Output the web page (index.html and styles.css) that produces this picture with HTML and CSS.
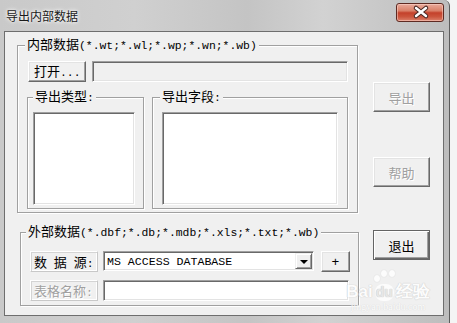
FILE: index.html
```html
<!DOCTYPE html>
<html>

<head>
    <link rel="stylesheet" href="styles.css">
</head>

<body>
    <div class="window">
        <div class="titlebar">
            <span class="title">导出内部数据</span>
            <button type="button" class="close">
                <svg width="46" height="17" viewBox="0 0 46 17">
                    <path d="M19 4 L29 12 M29 4 L19 12" stroke="#4a2a26" stroke-width="4.5" stroke-linecap="round" />
                    <path d="M19 4 L29 12 M29 4 L19 12" stroke="#ffffff" stroke-width="2.4" stroke-linecap="round" />
                </svg>
            </button>
        </div>
        <div class="client">
            <div class="left">
                <fieldset class="group g1">
                    <legend>内部数据<span class="asc">(*.wt;*.wl;*.wp;*.wn;*.wb)</span></legend>
                    <div class="row">
                        <button type="button" class="btn open">打开<span class="asc">...</span></button>
                        <div class="sunken readonly"></div>
                    </div>
                    <div class="lists">
                        <fieldset class="group inner type">
                            <legend>导出类型<span class="asc">:</span></legend>
                            <div class="sunken listbox"></div>
                        </fieldset>
                        <fieldset class="group inner fields">
                            <legend>导出字段<span class="asc">:</span></legend>
                            <div class="sunken listbox"></div>
                        </fieldset>
                    </div>
                </fieldset>

                <fieldset class="group g2">
                    <legend>外部数据<span class="asc">(*.dbf;*.db;*.mdb;*.xls;*.txt;*.wb)</span></legend>
                    <div class="row">
                        <div class="tag">数<span class="asc"> </span>据<span class="asc"> </span>源<span class="asc">:</span></div>
                        <div class="sunken combo">
                            <span class="combo-text">MS ACCESS DATABASE</span>
                            <span class="drop"><span class="arrow"></span></span>
                        </div>
                        <button type="button" class="btn plus"><span class="asc">+</span></button>
                    </div>
                    <div class="row row2">
                        <div class="tag off">表格名称<span class="asc">:</span></div>
                        <div class="sunken tablename"></div>
                    </div>
                </fieldset>
            </div>

            <div class="right">
                <button type="button" class="btn side" disabled>导出</button>
                <button type="button" class="btn side help" disabled>帮助</button>
                <button type="button" class="btn side quit">退出</button>
            </div>

            <div class="mark">
                <div class="paw">
                    <span class="toe t1"></span><span class="toe t2"></span><span class="toe t3"></span>
                </div>
                <div class="mark-logo">Bai<span class="du">du</span>经验</div>
                <div class="mark-url">jingyan.baidu.com</div>
            </div>
        </div>
    </div>
</body>

</html>
```

FILE: styles.css
```css
body {
    margin: 0;
    background-color: #f4f4f4;
    font-family: "Noto Sans CJK SC", sans-serif;
    font-size: 13px;
    color: #000;
}

.window {
    width: 449px;
    height: 323px;
    overflow: hidden;
    background: linear-gradient(90deg, #c9c9c9 0%, #d0d0d0 30%, #c4c4c4 55%, #d2d2d2 72%, #bdbdbd 100%);
    border-right: 1px solid #5c5c5c;
    border-top-right-radius: 6px;
}

.titlebar {
    height: 31px;
    display: flex;
    justify-content: space-between;
    align-items: flex-start;
}

.title {
    margin: 7px 0 0 6px;
    font-size: 12px;
    line-height: 17px;
    color: #1a1a1a;
    text-shadow: 0 0 5px #fff, 0 0 3px #fff;
}

.close {
    margin: 3px 5px 0 0;
    width: 48px;
    height: 19px;
    padding: 0;
    border: 1px solid #5e2a22;
    border-radius: 3px;
    background: linear-gradient(#e9aa9c 0%, #d98068 40%, #c4412b 52%, #cb553d 75%, #dc826c 100%);
    box-shadow: inset 0 0 0 1px rgba(255, 220, 210, 0.5);
    display: flex;
    align-items: center;
    justify-content: center;
}

.client {
    position: relative;
    margin-left: 4px;
    width: 440px;
    height: 285px;
    box-sizing: border-box;
    border: 1px solid #6e6e6e;
    background-color: #f0f0f0;
    display: flex;
}

.asc {
    font-family: "Liberation Mono", monospace;
    font-size: 11.4px;
}

/* group boxes */
.left {
    width: 342px;
    margin-left: 12px;
    padding-top: 4px;
    display: flex;
    flex-direction: column;
    align-items: flex-start;
}

.group {
    box-sizing: border-box;
    margin: 0;
    min-width: 0;
    border: 1px solid #a0a0a0;
    box-shadow: inset 1px 1px 0 #fff, 1px 1px 0 #fff;
}

.group legend {
    padding: 0 2px;
    line-height: 15px;
    background-color: #f0f0f0;
    white-space: nowrap;
}

.g1 {
    width: 341px;
    height: 177px;
    padding: 7px 9px 6px 9px;
}

.g1 > legend {
    margin-left: -2px;
}

.row {
    display: flex;
    height: 21px;
}

.lists {
    display: flex;
    gap: 8px;
    margin-top: 6px;
}

.inner {
    height: 121px;
    padding-top: 6px;
    padding-bottom: 6px;
}

.type {
    width: 117px;
    padding-left: 5px;
    padding-right: 8px;
}

.fields {
    width: 196px;
    padding-left: 9px;
    padding-right: 9px;
}

.fields > legend {
    margin-left: -2px;
}

.listbox {
    height: 93px;
    background-color: #fff;
}

.g2 {
    width: 339px;
    height: 83px;
    margin-top: 10px;
    margin-left: 3px;
    padding: 10px 8px 7px 9px;
}

.g2 > legend {
    margin-left: -4px;
}

.row2 {
    margin-top: 8px;
}

/* 3d edges */
.sunken {
    box-sizing: border-box;
    border: 1px solid;
    border-color: #a0a0a0 #fff #fff #a0a0a0;
    box-shadow: inset 1px 1px 0 #696969, inset -1px -1px 0 #e3e3e3;
}

.readonly {
    width: 256px;
    margin-left: 6px;
    background-color: #f0f0f0;
}

.btn {
    box-sizing: border-box;
    margin: 0;
    padding: 0;
    font-family: "Noto Sans CJK SC", sans-serif;
    font-size: 13px;
    line-height: 15px;
    color: #000;
    background-color: #f0f0f0;
    border: 1px solid;
    border-color: #fff #696969 #696969 #fff;
    box-shadow: inset -1px -1px 0 #a0a0a0, inset 1px 1px 0 #e3e3e3;
}

.btn:disabled {
    color: #a0a0a0;
    text-shadow: 1px 1px 0 #fff;
}

.open {
    width: 58px;
    margin-left: 1px;
    text-align: left;
    padding-left: 5px;
}

.tag {
    box-sizing: border-box;
    width: 68px;
    height: 21px;
    padding-left: 3px;
    line-height: 19px;
    border: 1px solid;
    border-color: #fff #c8c8c8 #c8c8c8 #fff;
    box-shadow: inset 1px 1px 0 #d4d4d4, inset -1px -1px 0 #fff;
    white-space: nowrap;
}

.tag.off {
    color: #a0a0a0;
    text-shadow: 1px 1px 0 #fff;
}

.combo {
    width: 211px;
    height: 20px;
    margin-left: 5px;
    background-color: #fff;
    display: flex;
    align-items: center;
    justify-content: space-between;
    padding: 0 1px 0 3px;
}

.combo-text {
    font-family: "Liberation Mono", monospace;
    font-size: 11.6px;
}

.drop {
    box-sizing: border-box;
    width: 17px;
    height: 16px;
    background-color: #f0f0f0;
    border: 1px solid;
    border-color: #f0f0f0 #696969 #696969 #f0f0f0;
    box-shadow: inset 1px 1px 0 #fff, inset -1px -1px 0 #a0a0a0;
    display: flex;
    align-items: center;
    justify-content: center;
}

.arrow {
    width: 0;
    height: 0;
    border-left: 4px solid transparent;
    border-right: 4px solid transparent;
    border-top: 4px solid #000;
    margin-top: 1px;
}

.plus {
    width: 29px;
    margin-left: 7px;
}

.plus .asc {
    font-size: 13px;
}

.tablename {
    width: 246px;
    margin-left: 5px;
    background-color: #fff;
}

/* buttons on the right */
.right {
    margin-left: 14px;
    padding-top: 50px;
    display: flex;
    flex-direction: column;
}

.side {
    width: 57px;
    height: 30px;
}

.help {
    margin-top: 45px;
}

.quit {
    margin-top: 43px;
    border: 1px solid #646464;
    box-shadow: inset 1px 1px 0 #fff, inset -1px -1px 0 #696969, inset -2px -2px 0 #a0a0a0;
}

/* watermark */
.mark {
    position: absolute;
    left: 333px;
    top: 235px;
    width: 100px;
    color: #fff;
    opacity: 0.8;
    text-align: center;
}

.paw {
    position: relative;
    height: 16px;
}

.toe {
    position: absolute;
    width: 6px;
    height: 7px;
    border-radius: 50%;
    background-color: #fff;
    box-shadow: 0 0 1px #c8c8c8;
}

.t1 {
    left: 36px;
    top: 8px;
}

.t2 {
    left: 43px;
    top: 3px;
}

.t3 {
    left: 51px;
    top: 3px;
}

.mark-logo {
    font-family: "Liberation Sans", sans-serif;
    font-weight: bold;
    font-size: 17px;
    line-height: 17px;
    text-shadow: 0 0 1px #c4c4c4, 0 0 1px #c4c4c4;
}

.du {
    display: inline-block;
    background-color: #fff;
    color: #e6e6e6;
    border-radius: 8px;
    padding: 0 1px;
    margin: 0 2px;
    font-size: 14px;
}

.mark-url {
    font-family: "Liberation Serif", serif;
    font-size: 10px;
    line-height: 12px;
    text-shadow: 0 0 1px #c4c4c4;
}
```
